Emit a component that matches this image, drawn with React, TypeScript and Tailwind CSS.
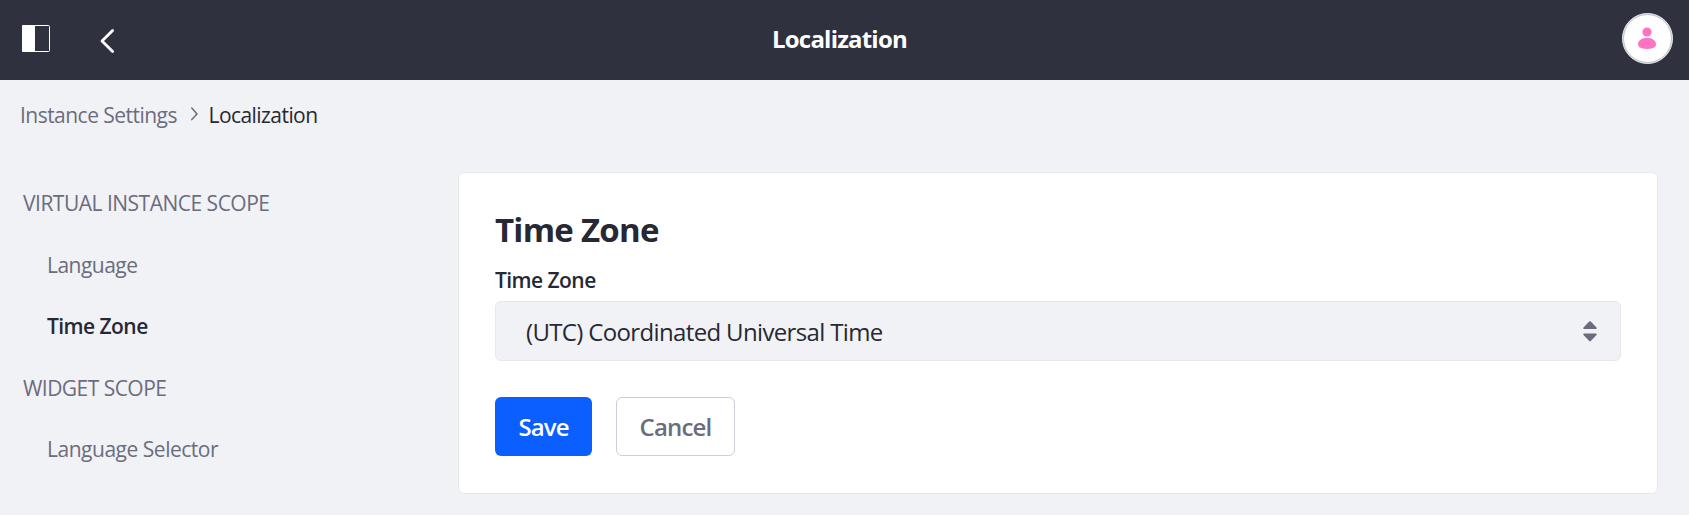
function PanelIcon() {
  return (
    <svg className="block h-[27px] w-7" viewBox="0 0 28 27">
      <rect x="0.5" y="0.5" width="27" height="26" rx="1" fill="none" stroke="#fff" />
      <path d="M1 0h12v27H1a1 1 0 0 1-1-1V1a1 1 0 0 1 1-1Z" fill="#fff" />
    </svg>
  );
}

function Header() {
  return (
    <header className="grid h-20 grid-cols-[1fr_auto_1fr] items-start bg-[#30313f] text-white">
      <div className="flex pl-[22px] pt-[25px]">
        <button aria-label="Toggle menu">
          <PanelIcon />
        </button>
        <button aria-label="Back" className="ml-[50px] mt-[3px] h-6">
          <svg className="block h-[26px] w-4" viewBox="0 0 16 26" fill="none" stroke="#fff" strokeWidth="2.8" strokeLinecap="round" strokeLinejoin="round">
            <path d="M12.600 2.400 2 13l10.600 10.600" />
          </svg>
        </button>
      </div>
      <h1 className="mr-[10px] mt-[21px] text-[24px] font-bold leading-9 tracking-[-0.8px]">Localization</h1>
      <div className="flex justify-end pr-4 pt-[13px]">
        <svg className="block size-[51px]" viewBox="0 0 51 51">
          <circle cx="25.5" cy="25.5" r="25" fill="#fff" stroke="#e7e7ed" />
          <circle cx="25.5" cy="25.5" r="24" fill="none" stroke="#a9aab5" strokeWidth="0.8" />
          <circle cx="25" cy="19" r="4.6" fill="#ff73c3" />
          <path d="M16 31c0-3.300 4-6.300 9-6.300s9 3 9 6.300c0 3.600-4 4.900-9 4.900s-9-1.300-9-4.900Z" fill="#ff73c3" />
        </svg>
      </div>
    </header>
  );
}

function Breadcrumb() {
  return (
    <nav className="flex h-[92px] items-start pl-5 pt-5 text-[21px] leading-[30px]">
      <a className="w-[171px] whitespace-nowrap tracking-[-0.53px] text-[#6b6c7e]">Instance Settings</a>
      <svg className="mt-[7px] h-[14px] w-2" viewBox="0 0 8 14" fill="none" stroke="#6b6c7e" strokeWidth="1.5" strokeLinecap="round" strokeLinejoin="round">
        <path d="M0.800 1 6 6.900 0.800 12.600" />
      </svg>
      <span className="ml-[9.5px] whitespace-nowrap tracking-[-0.56px] text-[#272833]">Localization</span>
    </nav>
  );
}

function Sidebar() {
  return (
    <aside className="flex w-[458px] flex-col whitespace-nowrap pt-[16.25px] text-[21px] leading-[30px] text-[#6b6c7e]">
      <div className="h-[61.5px] pl-[23px] tracking-[-0.5px]">VIRTUAL INSTANCE SCOPE</div>
      <a className="h-[61.5px] pl-[47px] tracking-[-0.53px]">Language</a>
      <a className="h-[61.5px] pl-[47px] font-semibold tracking-[-0.55px] text-[#272833]">Time Zone</a>
      <div className="h-[61.5px] pl-[23px] tracking-[-0.54px]">WIDGET SCOPE</div>
      <a className="pl-[47px] tracking-[-0.48px]">Language Selector</a>
    </aside>
  );
}

function SettingsCard() {
  return (
    <section className="flex h-[322px] w-[1200px] flex-col whitespace-nowrap rounded-md border border-[#e7e7ed] bg-white px-9 pt-[37px] text-[#272833]">
      <h2 className="text-[33px] font-bold leading-[40px] tracking-[-0.75px]">Time Zone</h2>
      <label className="mt-[15px] h-9 text-[21px] font-semibold leading-[30px] tracking-[-0.55px]">Time Zone</label>
      <div className="flex h-[60px] w-[1126px] items-start justify-between rounded-md border border-[#e7e7ed] bg-[#f1f2f5] pl-[30px] pr-[23px]">
        <span className="mt-3 text-[24px] leading-9 tracking-[-0.65px]">(UTC) Coordinated Universal Time</span>
        <svg className="mt-[19px] h-[21px] w-[14px]" viewBox="0 0 14 21" fill="#6b6c7e">
          <path d="M6.200.5a1.200 1.200 0 0 1 1.600 0l5.700 6a.9.9 0 0 1-.6 1.500H1.100a.9.9 0 0 1-.6-1.500ZM6.200 20a1.200 1.200 0 0 0 1.600 0l5.700-6a.9.9 0 0 0-.6-1.500H1.100a.9.9 0 0 0-.6 1.500Z" />
        </svg>
      </div>
      <div className="mt-9 flex gap-6">
        <button className="h-[59px] w-[97px] rounded-md bg-[#0b5fff] text-[24px] font-semibold leading-9 tracking-[-0.9px] text-white">Save</button>
        <button className="h-[59px] w-[119px] rounded-md border border-[#cdced9] bg-white text-[24px] font-semibold leading-9 tracking-[-0.8px] text-[#6b6c7e]">Cancel</button>
      </div>
    </section>
  );
}

export default function App() {
  return (
    <div className="h-[515px] w-[1689px] overflow-hidden bg-[#f1f2f5] font-['Open_Sans','Noto_Sans',sans-serif]">
      <Header />
      <Breadcrumb />
      <main className="flex">
        <Sidebar />
        <SettingsCard />
      </main>
    </div>
  );
}
